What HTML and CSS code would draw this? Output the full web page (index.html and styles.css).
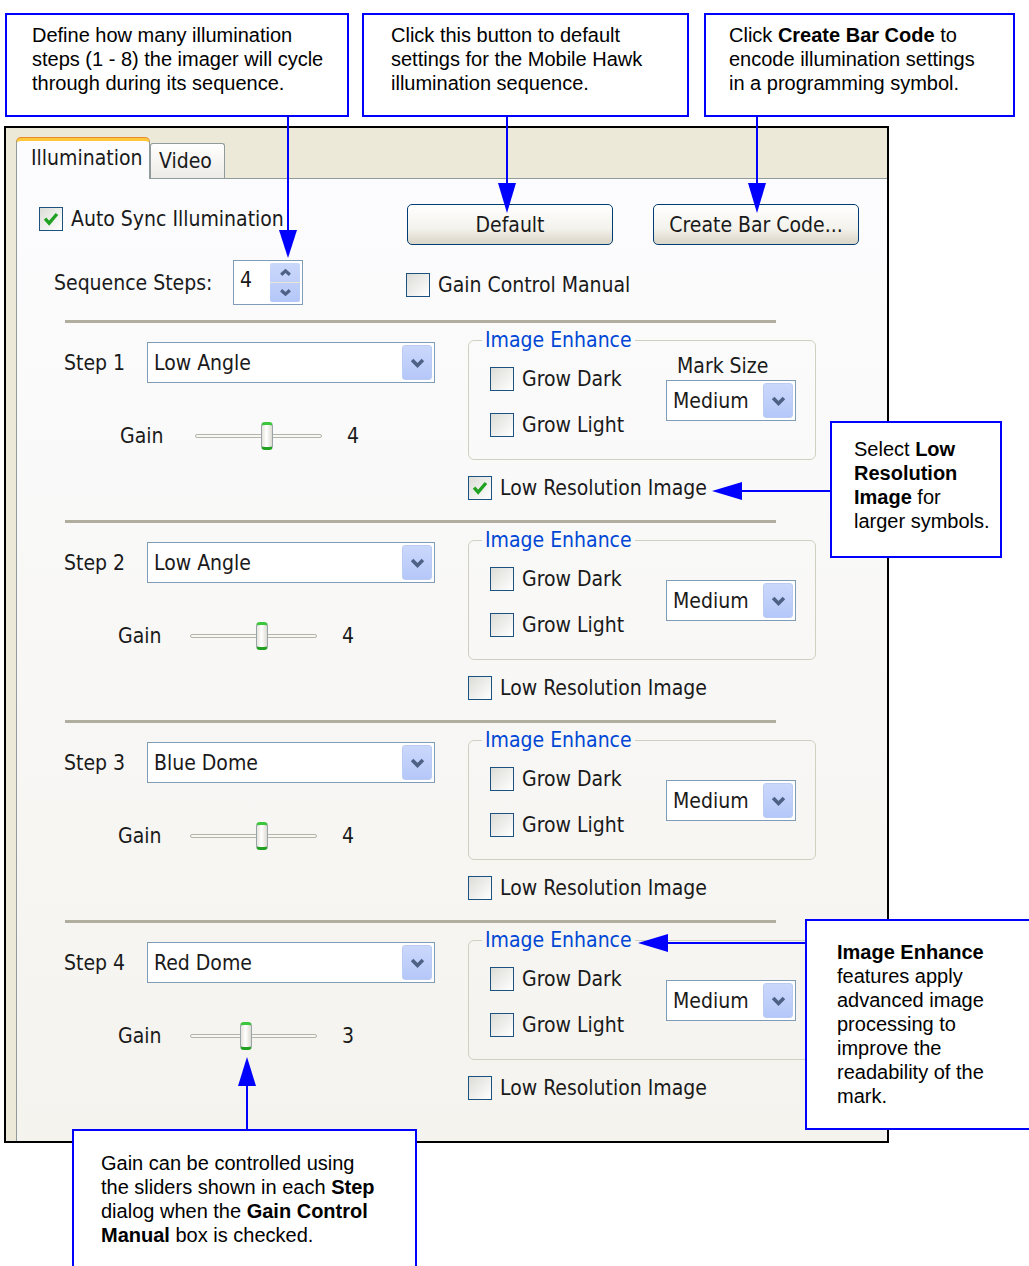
FILE: index.html
```html
<!DOCTYPE html>
<html>
<head>
  <title>Illumination Settings</title>
  <link rel="stylesheet" href="styles.css">
</head>
<body>
  <div class="page">
    <div class="notes">
      <div class="note note-steps">Define how many illumination<br>steps (1 - 8) the imager will cycle<br>through during its sequence.</div>
      <div class="note note-default">Click this button to default<br>settings for the Mobile Hawk<br>illumination sequence.</div>
      <div class="note note-barcode">Click <b>Create Bar Code</b> to<br>encode illumination settings<br>in a programming symbol.</div>
    </div>

    <div class="dialog">
      <div class="tabs">
        <div class="tab active">Illumination</div>
        <div class="tab">Video</div>
      </div>
      <div class="panel">
        <div class="top">
          <div class="top-left">
            <label class="check auto-sync">
              <span class="box"><svg viewBox="0 0 24 24"><path d="M5.5 11.5l4.5 5 8.5-10"/></svg></span>Auto Sync Illumination
            </label>
            <div class="seq">
              <span class="seq-label">Sequence Steps:</span>
              <div class="spin">
                <span>4</span>
                <div class="spin-btns">
                  <span><svg viewBox="0 0 12 8"><path d="M2 6l4-3.5 4 3.5"/></svg></span>
                  <span><svg viewBox="0 0 12 8"><path d="M2 2l4 3.5 4-3.5"/></svg></span>
                </div>
              </div>
            </div>
          </div>
          <div class="top-right">
            <div class="buttons">
              <div class="btn">Default</div>
              <div class="btn">Create Bar Code...</div>
            </div>
            <label class="check gain-manual"><span class="box"></span>Gain Control Manual</label>
          </div>
        </div>

        <section class="step">
          <div class="sep"></div>
          <div class="step-body">
            <div class="step-left">
              <div class="step-head">
                <span class="step-name">Step 1</span>
                <div class="combo wide"><span>Low Angle</span><span class="drop"><svg viewBox="0 0 14 10"><path d="M2.5 2.5l4.5 4.5 4.5-4.5"/></svg></span></div>
              </div>
              <div class="gain">
                <span class="gain-label">Gain</span>
                <div class="slider"><div class="track"></div><div class="thumb" style="left:66px"></div></div>
                <span class="gain-value">4</span>
              </div>
            </div>
            <div class="step-right">
              <fieldset class="group">
                <legend>Image Enhance</legend>
                <div class="group-body">
                  <div class="enhance-checks">
                    <label class="check"><span class="box"></span>Grow Dark</label>
                    <label class="check"><span class="box"></span>Grow Light</label>
                  </div>
                  <div class="mark">
                    <div class="mark-label">Mark Size</div>
                    <div class="combo small"><span>Medium</span><span class="drop"><svg viewBox="0 0 14 10"><path d="M2.5 2.5l4.5 4.5 4.5-4.5"/></svg></span></div>
                  </div>
                </div>
              </fieldset>
              <label class="check lowres"><span class="box"><svg viewBox="0 0 24 24"><path d="M5.5 11.5l4.5 5 8.5-10"/></svg></span>Low Resolution Image</label>
            </div>
          </div>
        </section>

        <section class="step">
          <div class="sep"></div>
          <div class="step-body">
            <div class="step-left">
              <div class="step-head">
                <span class="step-name">Step 2</span>
                <div class="combo wide"><span>Low Angle</span><span class="drop"><svg viewBox="0 0 14 10"><path d="M2.5 2.5l4.5 4.5 4.5-4.5"/></svg></span></div>
              </div>
              <div class="gain gain-left">
                <span class="gain-label">Gain</span>
                <div class="slider"><div class="track"></div><div class="thumb" style="left:66px"></div></div>
                <span class="gain-value">4</span>
              </div>
            </div>
            <div class="step-right">
              <fieldset class="group">
                <legend>Image Enhance</legend>
                <div class="group-body">
                  <div class="enhance-checks">
                    <label class="check"><span class="box"></span>Grow Dark</label>
                    <label class="check"><span class="box"></span>Grow Light</label>
                  </div>
                  <div class="mark">
                    <div class="mark-label"></div>
                    <div class="combo small"><span>Medium</span><span class="drop"><svg viewBox="0 0 14 10"><path d="M2.5 2.5l4.5 4.5 4.5-4.5"/></svg></span></div>
                  </div>
                </div>
              </fieldset>
              <label class="check lowres"><span class="box"></span>Low Resolution Image</label>
            </div>
          </div>
        </section>

        <section class="step">
          <div class="sep"></div>
          <div class="step-body">
            <div class="step-left">
              <div class="step-head">
                <span class="step-name">Step 3</span>
                <div class="combo wide"><span>Blue Dome</span><span class="drop"><svg viewBox="0 0 14 10"><path d="M2.5 2.5l4.5 4.5 4.5-4.5"/></svg></span></div>
              </div>
              <div class="gain gain-left">
                <span class="gain-label">Gain</span>
                <div class="slider"><div class="track"></div><div class="thumb" style="left:66px"></div></div>
                <span class="gain-value">4</span>
              </div>
            </div>
            <div class="step-right">
              <fieldset class="group">
                <legend>Image Enhance</legend>
                <div class="group-body">
                  <div class="enhance-checks">
                    <label class="check"><span class="box"></span>Grow Dark</label>
                    <label class="check"><span class="box"></span>Grow Light</label>
                  </div>
                  <div class="mark">
                    <div class="mark-label"></div>
                    <div class="combo small"><span>Medium</span><span class="drop"><svg viewBox="0 0 14 10"><path d="M2.5 2.5l4.5 4.5 4.5-4.5"/></svg></span></div>
                  </div>
                </div>
              </fieldset>
              <label class="check lowres"><span class="box"></span>Low Resolution Image</label>
            </div>
          </div>
        </section>

        <section class="step">
          <div class="sep"></div>
          <div class="step-body">
            <div class="step-left">
              <div class="step-head">
                <span class="step-name">Step 4</span>
                <div class="combo wide"><span>Red Dome</span><span class="drop"><svg viewBox="0 0 14 10"><path d="M2.5 2.5l4.5 4.5 4.5-4.5"/></svg></span></div>
              </div>
              <div class="gain gain-left">
                <span class="gain-label">Gain</span>
                <div class="slider"><div class="track"></div><div class="thumb" style="left:50px"></div></div>
                <span class="gain-value">3</span>
              </div>
            </div>
            <div class="step-right">
              <fieldset class="group">
                <legend>Image Enhance</legend>
                <div class="group-body">
                  <div class="enhance-checks">
                    <label class="check"><span class="box"></span>Grow Dark</label>
                    <label class="check"><span class="box"></span>Grow Light</label>
                  </div>
                  <div class="mark">
                    <div class="mark-label"></div>
                    <div class="combo small"><span>Medium</span><span class="drop"><svg viewBox="0 0 14 10"><path d="M2.5 2.5l4.5 4.5 4.5-4.5"/></svg></span></div>
                  </div>
                </div>
              </fieldset>
              <label class="check lowres"><span class="box"></span>Low Resolution Image</label>
            </div>
          </div>
        </section>
      </div>
    </div>

    <div class="note note-lowres">Select <b>Low<br>Resolution<br>Image</b> for<br>larger symbols.</div>
    <div class="note note-enhance"><b>Image Enhance</b><br>features apply<br>advanced image<br>processing to<br>improve the<br>readability of the<br>mark.</div>
    <div class="note note-gain">Gain can be controlled using<br>the sliders shown in each <b>Step</b><br>dialog when the <b>Gain Control<br>Manual</b> box is checked.</div>

    <!-- callout arrows -->
    <svg class="arrows" viewBox="0 0 1029 1266">
      <path class="line" d="M288 117V232M507 117V185M757 117V185M830 491H740M805 943H666M247 1130V1084"/>
      <path class="head" d="M279 230H297L288 258Z"/>
      <path class="head" d="M498 183H516L507 213Z"/>
      <path class="head" d="M748 183H766L757 213Z"/>
      <path class="head" d="M742 482V500L712 491Z"/>
      <path class="head" d="M668 934V952L638 943Z"/>
      <path class="head" d="M238 1086H256L247 1057Z"/>
    </svg>
  </div>
</body>
</html>
```

FILE: styles.css
```css
body {
  margin: 0;
  background-color: #ffffff;
  font-family: "Liberation Sans", Arial, sans-serif;
}

.page {
  position: relative;
  width: 1029px;
  height: 1266px;
  padding-top: 13px;
  box-sizing: border-box;
  overflow: hidden;
}

/* callout boxes */
.note {
  border: 2px solid #0000ff;
  background-color: #ffffff;
  color: #000000;
  font-size: 20px;
  line-height: 24px;
  white-space: nowrap;
  box-sizing: border-box;
}

.notes {
  display: flex;
  height: 104px;
}

.note-steps {
  width: 344px;
  margin-left: 5px;
  padding: 8px 0 0 25px;
}

.note-default {
  width: 327px;
  margin-left: 13px;
  padding: 8px 0 0 27px;
}

.note-barcode {
  width: 311px;
  margin-left: 15px;
  padding: 8px 0 0 23px;
}

.note-lowres,
.note-enhance,
.note-gain {
  position: absolute;
  z-index: 2;
}

.note-lowres {
  left: 830px;
  top: 421px;
  width: 172px;
  height: 137px;
  padding: 14px 0 0 22px;
}

.note-enhance {
  left: 805px;
  top: 919px;
  width: 260px;
  height: 211px;
  padding: 19px 0 0 30px;
}

.note-gain {
  left: 72px;
  top: 1129px;
  width: 345px;
  height: 200px;
  padding: 20px 0 0 27px;
}

.arrows {
  position: absolute;
  left: 0;
  top: 0;
  width: 1029px;
  height: 1266px;
  z-index: 3;
  pointer-events: none;
}

.arrows .line {
  stroke: #0000ff;
  stroke-width: 2;
  fill: none;
}

.arrows .head {
  fill: #0000ff;
}

/* the XP dialog */
.dialog {
  width: 885px;
  height: 1017px;
  margin: 9px 0 0 4px;
  padding: 10px 0 0 10px;
  border: 2px solid #000000;
  box-sizing: border-box;
  background-color: #ece9d8;
  overflow: hidden;
  font-family: "DejaVu Sans Condensed", "DejaVu Sans", sans-serif;
  font-size: 21px;
  color: #1a1a1a;
}

.tabs {
  display: flex;
  align-items: flex-end;
  height: 40px;
}

.tab {
  display: flex;
  align-items: center;
  height: 35px;
  padding: 0 12px 0 8px;
  border: 1px solid #919b9c;
  border-bottom: none;
  border-radius: 3px 3px 0 0;
  box-sizing: border-box;
  background: linear-gradient(#ffffff, #ecebe6);
}

.tab.active {
  position: relative;
  z-index: 1;
  width: 134px;
  height: 41px;
  margin-bottom: -1px;
  padding: 0 0 4px 14px;
  border-top: 3px solid #ffc83c;
  border-radius: 5px 5px 0 0;
  box-shadow: 0 -1px 0 #e68b2c;
  background: #fcfcfe;
}

.panel {
  height: 963px;
  border-top: 1px solid #919b9c;
  border-left: 1px solid #919b9c;
  box-sizing: border-box;
  background: linear-gradient(#fcfcfe, #f4f3ee);
}

/* controls */
.check {
  display: flex;
  align-items: center;
  gap: 8px;
  height: 24px;
  white-space: nowrap;
}

.box {
  display: flex;
  width: 24px;
  height: 24px;
  border: 1px solid #1c5180;
  box-sizing: border-box;
  background: linear-gradient(135deg, #dcdcd7, #ffffff);
}

.box svg {
  width: 22px;
  height: 22px;
}

.box path {
  fill: none;
  stroke: #21a121;
  stroke-width: 3.6;
}

.btn {
  display: flex;
  align-items: center;
  justify-content: center;
  width: 206px;
  height: 41px;
  border: 1px solid #003c74;
  border-radius: 5px;
  box-sizing: border-box;
  background: linear-gradient(#ffffff, #f3f2ec 60%, #d9d4c6);
  box-shadow: inset 0 -2px 0 #dcd8cb;
}

.combo {
  display: flex;
  align-items: center;
  justify-content: space-between;
  height: 41px;
  padding: 2px 2px 2px 6px;
  border: 1px solid #7f9db9;
  box-sizing: border-box;
  background-color: #ffffff;
}

.combo.wide {
  width: 288px;
}

.combo.small {
  width: 130px;
}

.drop {
  display: flex;
  align-items: center;
  justify-content: center;
  width: 30px;
  height: 35px;
  border: 1px solid #bccbf3;
  border-radius: 3px;
  box-sizing: border-box;
  background: linear-gradient(#cbd8fc, #b4c7f8);
}

.drop svg {
  width: 17px;
  height: 12px;
}

.drop path,
.spin-btns path {
  fill: none;
  stroke: #4d6185;
  stroke-width: 3;
}

/* top area */
.top {
  display: flex;
  height: 141px;
  padding: 25px 0 0 22px;
  box-sizing: border-box;
}

.top-left {
  width: 368px;
}

.auto-sync {
  margin-top: 3px;
}

.seq {
  display: flex;
  align-items: center;
  margin-top: 29px;
  padding-left: 15px;
}

.seq-label {
  width: 179px;
}

.spin {
  display: flex;
  justify-content: space-between;
  width: 70px;
  height: 45px;
  padding: 2px 2px 2px 6px;
  border: 1px solid #7f9db9;
  box-sizing: border-box;
  background-color: #ffffff;
  line-height: 34px;
}

.spin-btns {
  display: flex;
  flex-direction: column;
  width: 30px;
  border-radius: 2px;
  background: linear-gradient(#cbd8fc, #b4c7f8);
}

.spin-btns span {
  display: flex;
  align-items: center;
  justify-content: center;
  flex: 1;
}

.spin-btns span:first-child {
  border-bottom: 1px solid #e9e6d6;
}

.spin-btns svg {
  width: 13px;
  height: 9px;
}

.buttons {
  display: flex;
  gap: 40px;
}

.gain-manual {
  margin: 28px 0 0 -1px;
}

/* steps */
.step {
  height: 200px;
}

.sep {
  width: 711px;
  height: 3px;
  margin-left: 48px;
  background-color: #b1ae9f;
}

.step-body {
  display: flex;
}

.step-left {
  width: 418px;
  padding: 19px 0 0 47px;
  box-sizing: border-box;
}

.step-head {
  display: flex;
  align-items: center;
}

.step-name {
  width: 83px;
}

.gain {
  display: flex;
  align-items: center;
  height: 30px;
  margin-top: 38px;
  padding-left: 56px;
}

.gain-left {
  padding-left: 54px;
}

.gain-label {
  width: 75px;
}

.gain-left .gain-label {
  width: 72px;
}

.slider {
  position: relative;
  width: 127px;
  height: 30px;
}

.track {
  position: absolute;
  left: 0;
  right: 0;
  top: 13px;
  height: 4px;
  border: 1px solid #b5b4a9;
  border-radius: 3px;
  box-sizing: border-box;
  background-color: #f7f7f3;
}

.thumb {
  position: absolute;
  top: 1px;
  width: 12px;
  height: 28px;
  border: 1px solid #9aa3a8;
  border-top: 3px solid #3cc63c;
  border-bottom: 3px solid #21a121;
  border-radius: 4px;
  box-sizing: border-box;
  background: linear-gradient(to right, #e4e3dc, #ffffff 45%, #dcdbd3);
}

.gain-value {
  margin-left: 25px;
}

.step-right {
  margin-left: 33px;
  padding-top: 5px;
}

.group {
  width: 348px;
  height: 132px;
  margin: 0;
  padding: 15px 0 0 21px;
  min-width: 0;
  border: 1px solid #d0d0bf;
  border-radius: 6px;
  box-sizing: border-box;
}

.group legend {
  margin-left: -8px;
  padding: 0 3px;
  line-height: 24px;
  color: #0046d5;
}

.group-body {
  display: flex;
}

.enhance-checks {
  display: flex;
  flex-direction: column;
  gap: 22px;
  width: 176px;
}

.mark {
  margin-top: -13px;
}

.mark-label {
  height: 24px;
  margin: 0 0 2px 11px;
  line-height: 24px;
}

.lowres {
  margin-top: 16px;
}
```
